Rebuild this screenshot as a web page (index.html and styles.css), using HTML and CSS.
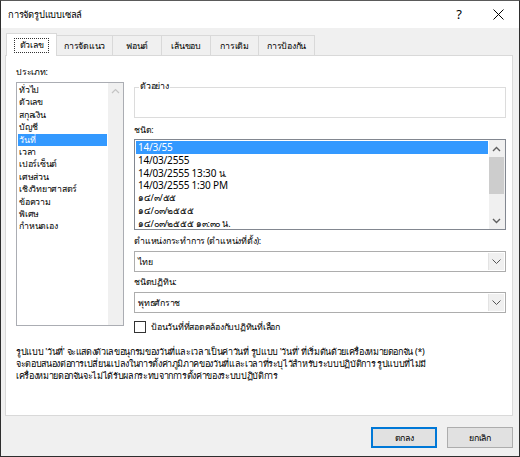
FILE: index.html
```html
<!DOCTYPE html>
<html lang="th">
<head>
  <meta charset="UTF-8" />
  <title>การจัดรูปแบบเซลล์</title>
  <link rel="stylesheet" href="styles.css">
</head>
<body>
  <div class="dialog">
    <div class="titlebar">
      <span class="title">การจัดรูปแบบเซลล์</span>
      <span class="help">?</span>
      <svg class="close" width="11" height="11" viewBox="0 0 11 11">
        <path d="M0.5 0.5 L10.5 10.5 M10.5 0.5 L0.5 10.5" stroke="#000" stroke-width="1" fill="none" />
      </svg>
    </div>

    <div class="frame">
      <div class="tabs">
        <div class="tab active"><span class="focus">ตัวเลข</span></div>
        <div class="tab">การจัดแนว</div>
        <div class="tab">ฟอนต์</div>
        <div class="tab">เส้นขอบ</div>
        <div class="tab">การเติม</div>
        <div class="tab">การป้องกัน</div>
      </div>

      <div class="panel">
        <div class="columns">
          <div class="left">
            <div class="label">ประเภท:</div>
            <div class="listbox category">
              <ul class="items">
                <li>ทั่วไป</li>
                <li>ตัวเลข</li>
                <li>สกุลเงิน</li>
                <li>บัญชี</li>
                <li class="selected">วันที่</li>
                <li>เวลา</li>
                <li>เปอร์เซ็นต์</li>
                <li>เศษส่วน</li>
                <li>เชิงวิทยาศาสตร์</li>
                <li>ข้อความ</li>
                <li>พิเศษ</li>
                <li>กำหนดเอง</li>
              </ul>
              <div class="scrollbar">
                <svg width="9" height="6" viewBox="0 0 9 6"><path d="M1 5 L4.5 1.5 L8 5" stroke="#c4c4c4" stroke-width="1.2" fill="none" /></svg>
              </div>
            </div>
          </div>

          <div class="right">
            <div class="sample">
              <span class="legend">ตัวอย่าง</span>
            </div>

            <div class="label">ชนิด:</div>
            <div class="listbox types">
              <ul class="items">
                <li class="selected">14/3/55</li>
                <li>14/03/2555</li>
                <li>14/03/2555 13:30 <span class="th">น.</span></li>
                <li>14/03/2555 1:30 PM</li>
                <li class="th">๑๔/๓/๕๕</li>
                <li class="th">๑๔/๐๓/๒๕๕๕</li>
                <li class="th">๑๔/๐๓/๒๕๕๕ ๑๓:๓๐ น.</li>
              </ul>
              <div class="scrollbar">
                <svg class="arrow" width="9" height="6" viewBox="0 0 9 6"><path d="M1 5 L4.5 1.5 L8 5" stroke="#606060" stroke-width="1.4" fill="none" /></svg>
                <div class="track"><div class="thumb"></div></div>
                <svg class="arrow" width="9" height="6" viewBox="0 0 9 6"><path d="M1 1 L4.5 4.5 L8 1" stroke="#606060" stroke-width="1.4" fill="none" /></svg>
              </div>
            </div>

            <div class="label">ตำแหน่งกระทำการ (ตำแหน่งที่ตั้ง):</div>
            <div class="select">
              <span class="value">ไทย</span>
              <span class="drop">
                <svg width="9" height="5" viewBox="0 0 9 5"><path d="M0.5 0.5 L4.5 4.5 L8.5 0.5" stroke="#555" stroke-width="1" fill="none" /></svg>
              </span>
            </div>

            <div class="label">ชนิดปฏิทิน:</div>
            <div class="select">
              <span class="value">พุทธศักราช</span>
              <span class="drop">
                <svg width="9" height="5" viewBox="0 0 9 5"><path d="M0.5 0.5 L4.5 4.5 L8.5 0.5" stroke="#555" stroke-width="1" fill="none" /></svg>
              </span>
            </div>

            <label class="check">
              <span class="box"></span>
              ป้อนวันที่ที่สอดคล้องกับปฏิทินที่เลือก
            </label>
          </div>
        </div>

        <p class="note">
          รูปแบบ 'วันที่' จะแสดงตัวเลขอนุกรมของวันที่และเวลาเป็นค่าวันที่ รูปแบบ 'วันที่' ที่เริ่มต้นด้วยเครื่องหมายดอกจัน (*)<br>
          จะตอบสนองต่อการเปลี่ยนแปลงในการตั้งค่าภูมิภาคของวันที่และเวลาที่ระบุไว้สำหรับระบบปฏิบัติการ รูปแบบที่ไม่มี<br>
          เครื่องหมายดอกจันจะไม่ได้รับผลกระทบจากการตั้งค่าของระบบปฏิบัติการ
        </p>
      </div>

      <div class="buttons">
        <button class="btn default">ตกลง</button>
        <button class="btn">ยกเลิก</button>
      </div>
    </div>
  </div>
</body>
</html>
```

FILE: styles.css
```css
* {
  box-sizing: border-box;
}

body {
  margin: 0;
  background-color: #f0f0f0;
  font-family: "Noto Sans", sans-serif;
  font-size: 8.8px;
  letter-spacing: -0.25px;
  color: #000;
}

.dialog {
  width: 520px;
  height: 457px;
  border: 1px solid #2e2e2e;
  border-top-color: #5a5a5a;
  background-color: #f0f0f0;
  display: flex;
  flex-direction: column;
}

/* title bar */

.titlebar {
  height: 27px;
  background-color: #fff;
  display: flex;
  align-items: center;
  padding: 0 0 0 7px;
}

.title {
  flex: 1;
  font-size: 9.3px;
  letter-spacing: -0.2px;
}

.help {
  font-size: 13px;
  letter-spacing: 0;
  margin-right: 31px;
  margin-top: -1px;
}

.close {
  margin-right: 15px;
}

/* body of the dialog */

.frame {
  flex: 1;
  display: flex;
  flex-direction: column;
  padding: 5px 6px 0 4px;
}

.tabs {
  display: flex;
  height: 22px;
  align-items: flex-end;
  padding-left: 1px;
  position: relative;
  z-index: 1;
}

.tab {
  height: 20px;
  border: 1px solid #d9d9d9;
  border-bottom: none;
  border-left: none;
  background-color: #f0f0f0;
  display: flex;
  align-items: center;
  justify-content: center;
}

.tab:nth-child(2) { width: 56px; }
.tab:nth-child(3) { width: 49px; }
.tab:nth-child(4) { width: 49px; }
.tab:nth-child(5) { width: 48px; }
.tab:nth-child(6) { width: 56px; }

.tab.active {
  width: 51px;
  height: 23px;
  margin-bottom: -1px;
  background-color: #fff;
  border-left: 1px solid #d9d9d9;
}

.focus {
  border: 1px dotted #333;
  padding: 0 5px;
  height: 15px;
  display: flex;
  align-items: center;
}

.panel {
  height: 361px;
  background-color: #fff;
  border: 1px solid #d9d9d9;
  padding: 9px 6px 0 10px;
  display: flex;
  flex-direction: column;
}

.columns {
  display: flex;
  gap: 10px;
}

.label {
  height: 15px;
  line-height: 15px;
}

.left {
  width: 108px;
}

.left .label {
  margin-bottom: 2px;
}

.right {
  width: 372px;
  display: flex;
  flex-direction: column;
}

/* list boxes */

.listbox {
  border: 1px solid #abadb3;
  display: flex;
  background-color: #fff;
}

.items {
  flex: 1;
  list-style: none;
  margin: 0;
  padding: 1px;
}

.category {
  height: 244px;
}

.category .items li {
  height: 12.4px;
  line-height: 12.4px;
  padding-left: 1px;
  white-space: nowrap;
}

.selected {
  background-color: #3399ff;
  color: #fff;
}

.scrollbar {
  width: 15px;
  background-color: #f0f0f0;
  display: flex;
  flex-direction: column;
  align-items: center;
  padding-top: 5px;
}

/* sample box with its caption sitting on the top border */

.sample {
  height: 31px;
  margin-top: 22px;
  border: 1px solid #dcdcdc;
  position: relative;
}

.legend {
  position: absolute;
  top: -9px;
  left: 4px;
  padding: 0 1px;
  background-color: #fff;
  line-height: 15px;
}

.right > .label {
  margin-top: 4px;
  margin-bottom: 2px;
}

.right > .sample + .label {
  margin-top: 5px;
  margin-bottom: 1px;
}

.types {
  height: 91px;
  border-color: #828790;
}

.types .items li {
  height: 12.8px;
  line-height: 12.8px;
  padding-left: 2px;
  font-size: 10px;
  letter-spacing: -0.2px;
  white-space: nowrap;
}

.types .items li.th,
.types .th {
  font-size: 9px;
  letter-spacing: -0.2px;
}

.types .scrollbar {
  padding: 1px 1px 2px 0;
  width: 16px;
}

.types .arrow {
  margin: 5px 0 3px;
}

.types .track {
  flex: 1;
  width: 15px;
  padding-top: 2px;
}

.thumb {
  height: 37px;
  background-color: #cdcdcd;
}

/* drop-down boxes */

.select {
  height: 21px;
  border: 1px solid #adadad;
  background-color: #fff;
  display: flex;
  align-items: stretch;
}

.select .value {
  flex: 1;
  padding-left: 3px;
  display: flex;
  align-items: center;
}

.select .drop {
  width: 16px;
  margin: 1px;
  background-color: #f0f0f0;
  border-left: 1px solid #e3e3e3;
  display: flex;
  align-items: center;
  justify-content: center;
}

.right > .select + .label {
  margin-top: 3px;
}

.check {
  display: flex;
  align-items: center;
  gap: 5px;
  margin-top: 8px;
  height: 12px;
}

.box {
  width: 12px;
  height: 12px;
  border: 1px solid #333;
  background-color: #fff;
}

.note {
  margin: 13px 0 0 0;
  font-size: 9px;
  letter-spacing: -0.35px;
  line-height: 12px;
}

/* buttons */

.buttons {
  display: flex;
  justify-content: flex-end;
  gap: 10px;
  margin-top: 11px;
}

.btn {
  width: 66px;
  height: 21px;
  background-color: #e1e1e1;
  border: 1px solid #adadad;
  font-family: "Noto Sans", sans-serif;
  font-size: 8.8px;
  letter-spacing: -0.25px;
  padding: 0;
}

.btn.default {
  border-color: #0078d7;
  box-shadow: inset 0 0 0 1px #0078d7;
}
```
